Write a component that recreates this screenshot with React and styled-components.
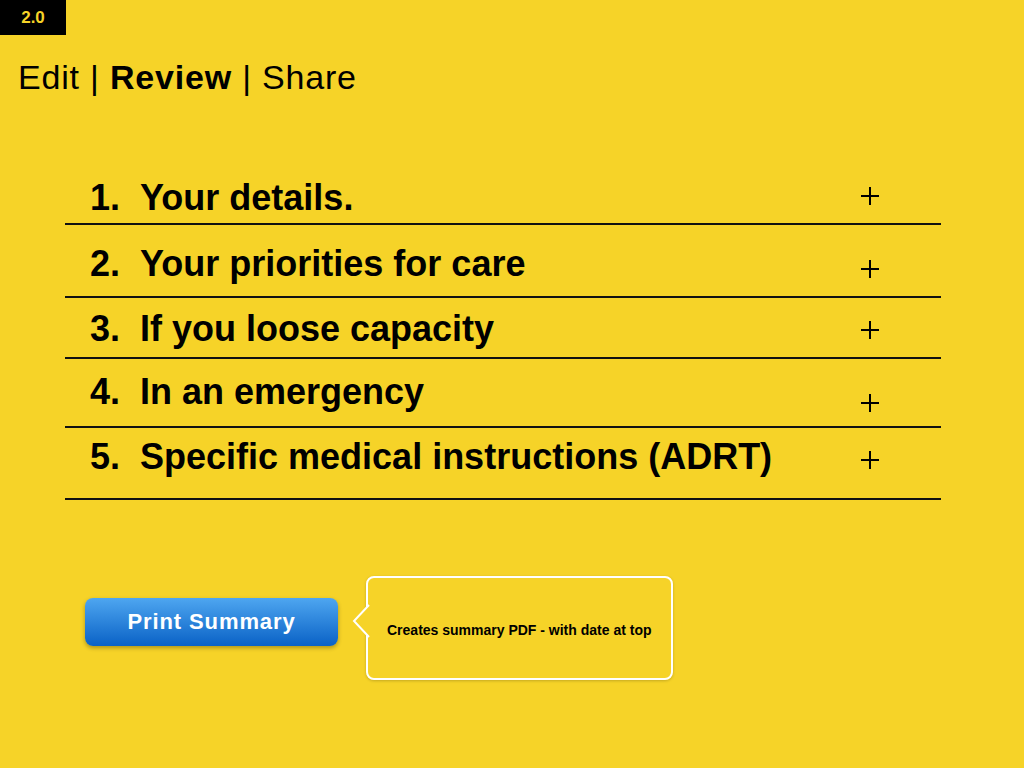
import React from 'react';
import styled, { createGlobalStyle } from 'styled-components';

const Global = createGlobalStyle`
  html, body {
    margin: 0;
    padding: 0;
    background: #f6d328;
  }
  body {
    font-family: "Liberation Sans", Arial, Helvetica, sans-serif;
    color: #000;
  }
`;

const Page = styled.div`
  width: 1024px;
  height: 768px;
  background: #f6d328;
  display: flex;
  flex-direction: column;
  overflow: hidden;
`;

const Version = styled.div`
  width: 66px;
  height: 35px;
  background: #000;
  color: #f6d328;
  font-weight: bold;
  font-size: 17px;
  display: flex;
  align-items: center;
  justify-content: center;
`;

const Nav = styled.div`
  margin: 22px 0 0 18px;
  font-size: 34px;
  line-height: 40px;
  letter-spacing: 0.8px;
`;

const Strong = styled.span`
  font-weight: bold;
`;

const Sections = styled.div`
  margin: 75px 0 0 65px;
  width: 876px;
  display: flex;
  flex-direction: column;
`;

const Row = styled.div`
  height: ${(p) => p.$h}px;
  border-bottom: 2px solid #111;
  display: flex;
  align-items: flex-start;
  justify-content: space-between;
  box-sizing: border-box;
`;

const Title = styled.div`
  margin-top: ${(p) => p.$top}px;
  padding-left: 25px;
  font-size: 36px;
  font-weight: bold;
  line-height: 40px;
  display: flex;
`;

const Num = styled.span`
  width: 50px;
`;

const Plus = styled.svg`
  margin-top: ${(p) => p.$top}px;
  margin-right: 62px;
  width: 18px;
  height: 18px;
  flex: none;
`;

const Footer = styled.div`
  margin: 76px 0 0 85px;
  display: flex;
  align-items: flex-start;
`;

const PrintButton = styled.button`
  margin-top: 22px;
  width: 253px;
  height: 48px;
  border: none;
  border-radius: 8px;
  background: linear-gradient(#4ea6f0, #0a62c6);
  box-shadow: 0 2px 4px rgba(0, 0, 0, 0.3);
  color: #fff;
  font-family: "Liberation Sans", Arial, sans-serif;
  font-weight: bold;
  font-size: 22px;
  letter-spacing: 0.9px;
  padding: 0;
`;

const Callout = styled.div`
  position: relative;
  margin-left: 28px;
  width: 307px;
  height: 104px;
  box-sizing: border-box;
  border: 2px solid #fff;
  border-radius: 8px;
  box-shadow: 0 1px 3px rgba(0, 0, 0, 0.2);
  display: flex;
  align-items: center;
  padding: 4px 0 0 19px;
  font-size: 14px;
  font-weight: bold;
`;

const Pointer = styled.svg`
  position: absolute;
  left: -16px;
  top: 26px;
  width: 18px;
  height: 34px;
`;

const sections = [
  { n: '1.', t: 'Your details.', h: 53, top: 6, plus: 15 },
  { n: '2.', t: 'Your priorities for care', h: 73, top: 19, plus: 35 },
  { n: '3.', t: 'If you loose capacity', h: 61, top: 11, plus: 23 },
  { n: '4.', t: 'In an emergency', h: 69, top: 13, plus: 35 },
  { n: '5.', t: 'Specific medical instructions (ADRT)', h: 72, top: 9, plus: 23 },
];

function PlusIcon({ top }) {
  return (
    <Plus $top={top} viewBox="0 0 18 18">
      <path d="M9 0v18M0 9h18" stroke="#000" strokeWidth="2" fill="none" />
    </Plus>
  );
}

export default function App() {
  return (
    <Page>
      <Global />
      <Version>2.0</Version>
      <Nav>
        Edit | <Strong>Review</Strong> | Share
      </Nav>
      <Sections>
        {sections.map((s) => (
          <Row key={s.n} $h={s.h}>
            <Title $top={s.top}>
              <Num>{s.n}</Num>
              {s.t}
            </Title>
            <PlusIcon top={s.plus} />
          </Row>
        ))}
      </Sections>
      <Footer>
        <PrintButton>Print Summary</PrintButton>
        <Callout>
          <Pointer viewBox="0 0 18 34">
            <path d="M17 1 L2 17 L17 33" fill="#f6d328" stroke="#fff" strokeWidth="2" />
          </Pointer>
          Creates summary PDF - with date at top
        </Callout>
      </Footer>
    </Page>
  );
}
